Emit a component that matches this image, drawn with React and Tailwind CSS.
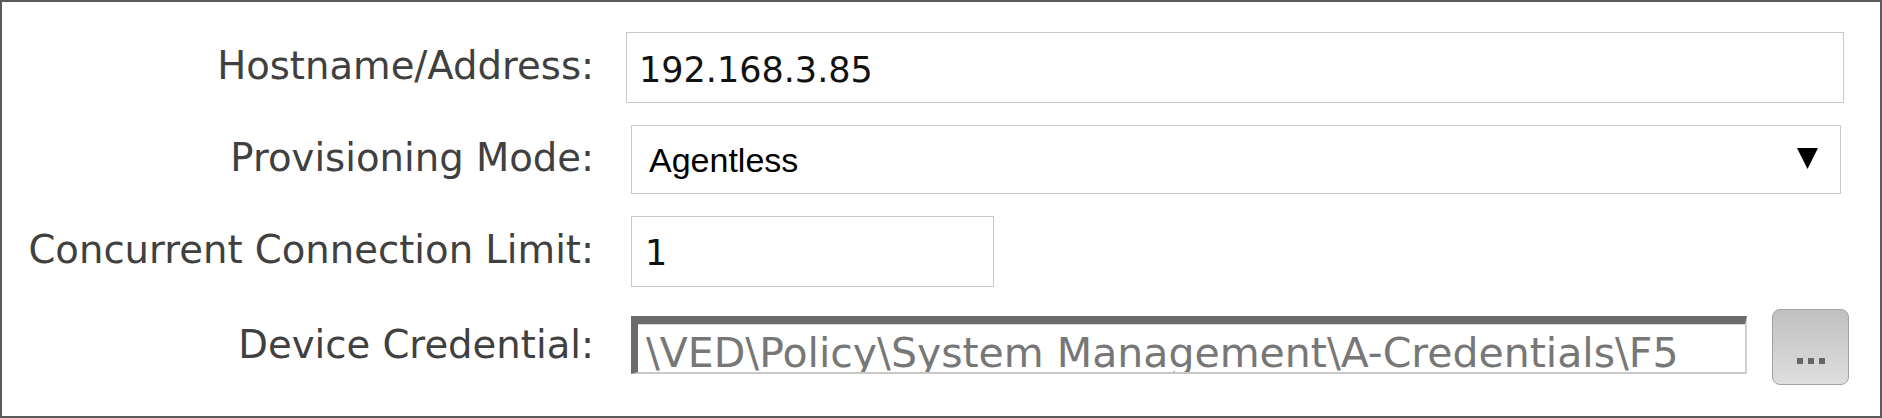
import React from 'react';

const labelCls =
  "w-[592px] shrink-0 text-right text-[38.6px] text-[#404040] pb-[4px] whitespace-nowrap";

const Row = ({ label, h, children }) => (
  <div className={`flex items-center ${h}`}>
    <div className={labelCls}>{label}</div>
    {children}
  </div>
);

export default function App() {
  return (
    <div
      className="w-[1882px] h-[418px] bg-white border-2 border-[#5a5a5a] pt-[30px] flex flex-col gap-[22px]"
      style={{ fontFamily: '"DejaVu Sans", Verdana, sans-serif' }}
    >
      {/* Hostname */}
      <Row label="Hostname/Address:" h="h-[71px]">
        <div className="ml-[32px] w-[1218px] h-[71px] border border-[#c8c8c8] flex items-center pl-[12px] pt-[6px] text-[35px] text-[#111]">
          192.168.3.85
        </div>
      </Row>

      {/* Provisioning mode */}
      <Row label="Provisioning Mode:" h="h-[69px]">
        <div className="ml-[37px] w-[1210px] h-[69px] border border-[#c8c8c8] flex items-center justify-between pl-[17px] pr-[22px]">
          <span
            className="text-[34px] text-black pt-[2px]"
            style={{ fontFamily: '"Liberation Sans", Arial, sans-serif' }}
          >
            Agentless
          </span>
          <svg width="21" height="21" viewBox="0 0 21 21" className="mb-[2px]">
            <polygon points="0,0 21,0 10.5,21" fill="#000" />
          </svg>
        </div>
      </Row>

      {/* Concurrent limit */}
      <Row label="Concurrent Connection Limit:" h="h-[71px]">
        <div className="ml-[37px] w-[363px] h-[71px] border border-[#c8c8c8] flex items-center pl-[13px] pt-[4px] text-[35px] text-[#111]">
          1
        </div>
      </Row>

      {/* Device credential */}
      <Row label="Device Credential:" h="h-[76px]">
        <div className="ml-[37px] w-[1116px] h-[58px] border-t-[8px] border-l-[7px] border-r-2 border-b-2 border-t-[#6b6b6b] border-l-[#6b6b6b] border-r-[#d0d0d0] border-b-[#c8c8c8] overflow-hidden mb-[4px]">
          <div className="border-t border-[#d8d8d8] h-full pl-[8px] pt-[5px] text-[41px] leading-[46px] text-[#777] whitespace-nowrap">
            \VED\Policy\System Management\A-Credentials\F5
          </div>
        </div>
        <button className="ml-[25px] w-[77px] h-[76px] rounded-[8px] border border-[#a2a2a2] bg-gradient-to-b from-[#c0c0c0] to-[#dedede] flex items-end justify-center pb-[20px] gap-[5px]">
          <span className="w-[6px] h-[6px] bg-[#666]" />
          <span className="w-[6px] h-[6px] bg-[#666]" />
          <span className="w-[6px] h-[6px] bg-[#666]" />
        </button>
      </Row>
    </div>
  );
}
